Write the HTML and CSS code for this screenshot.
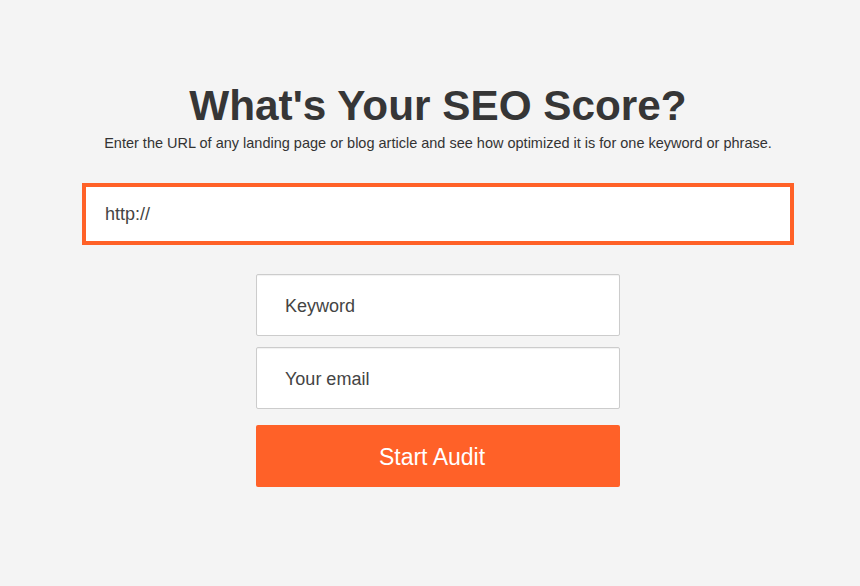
FILE: index.html
```html
<!DOCTYPE html>
<html lang="en">
<head>
<meta charset="utf-8">
<title>What's Your SEO Score?</title>
<link rel="stylesheet" href="styles.css">
</head>
<body>
<main class="page">
  <h1 class="title">What's Your SEO Score?</h1>
  <p class="subtitle">Enter the URL of any landing page or blog article and see how optimized it is for one keyword or phrase.</p>
  <form class="audit-form">
    <div class="url-field">http://</div>
    <div class="stack">
      <div class="field">Keyword</div>
      <div class="field">Your email</div>
      <div class="button">Start Audit</div>
    </div>
  </form>
</main>
</body>
</html>
```

FILE: styles.css
```css
html, body {
  margin: 0;
  padding: 0;
  background: #f4f4f4;
  font-family: "Liberation Sans", Arial, sans-serif;
}

.page {
  box-sizing: border-box;
  width: 860px;
  height: 586px;
  padding: 81px 0 0 16px;
  display: flex;
  flex-direction: column;
  align-items: center;
}

.title {
  margin: 0;
  font-size: 42.3px;
  line-height: 50px;
  font-weight: bold;
  color: #363636;
}

.subtitle {
  margin: 3px 0 0;
  font-size: 14.5px;
  line-height: 18px;
  color: #333333;
}

.audit-form {
  margin-top: 31px;
  display: flex;
  flex-direction: column;
  align-items: center;
}

.url-field {
  box-sizing: border-box;
  width: 712px;
  height: 62px;
  border: 4px solid #ff6127;
  background: #ffffff;
  padding-left: 19px;
  display: flex;
  align-items: center;
  font-size: 18px;
  color: #444444;
}

.stack {
  margin-top: 29px;
  display: flex;
  flex-direction: column;
  gap: 11px;
}

.field {
  box-sizing: border-box;
  width: 364px;
  height: 62px;
  border: 1px solid #cccccc;
  border-radius: 2px;
  background: #ffffff;
  box-shadow: inset 0 1px 1px rgba(0, 0, 0, 0.06);
  padding: 2px 0 0 28px;
  display: flex;
  align-items: center;
  font-size: 18px;
  color: #444444;
}

.button {
  box-sizing: border-box;
  width: 364px;
  height: 62px;
  margin-top: 5px;
  padding: 2px 12px 0 0;
  border-radius: 2px;
  background: #ff6128;
  color: #ffffff;
  font-size: 23px;
  display: flex;
  align-items: center;
  justify-content: center;
}
```
